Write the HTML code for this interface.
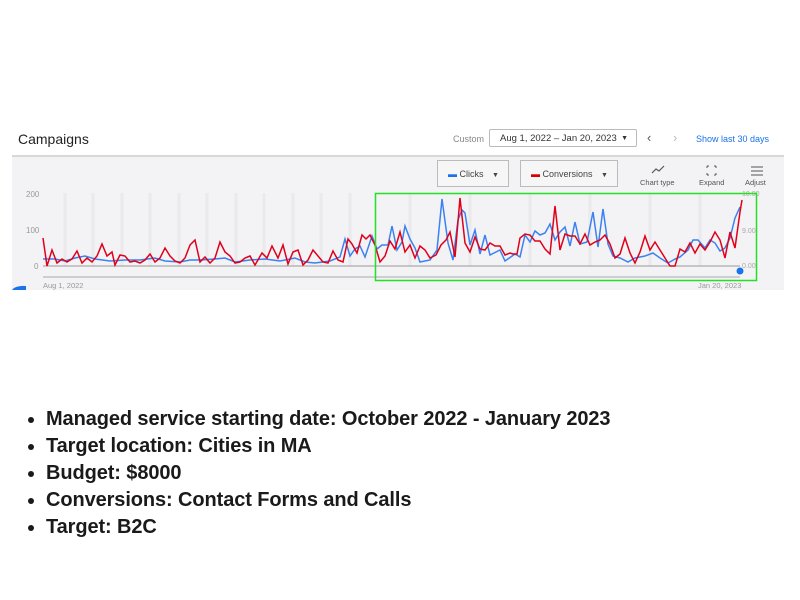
<!DOCTYPE html>
<html><head><meta charset="utf-8"><style>
body{margin:0;width:800px;height:600px;background:#fff;position:relative;overflow:hidden;font-family:"Liberation Sans",sans-serif}
.a{position:absolute}
ul{position:absolute;left:22px;top:406px;margin:0;padding:0 0 0 24px;font-size:20px;font-weight:bold;color:#1a1a1a;line-height:27px;letter-spacing:-0.1px}
</style></head><body>
<div class="a" style="left:12px;top:126px;width:772px;height:29px;background:#fff;border-bottom:2px solid #d8d8d8"></div>
<div class="a" style="left:18px;top:131px;font-size:14px;color:#222">Campaigns</div>
<div class="a" style="left:453px;top:134px;font-size:9px;color:#888">Custom</div>
<div class="a" style="left:489px;top:129px;width:148px;height:18px;border:1px solid #bbb;border-radius:2px;font-size:9.5px;color:#333;line-height:18px;padding-left:10px;box-sizing:border-box">Aug 1, 2022 – Jan 20, 2023<span style="position:absolute;right:8px;font-size:7px">▼</span></div>
<div class="a" style="left:647px;top:130px;font-size:13px;color:#555">‹</div>
<div class="a" style="left:673px;top:130px;font-size:13px;color:#bbb">›</div>
<div class="a" style="left:696px;top:134px;font-size:9px;color:#1a73e8">Show last 30 days</div>
<div class="a" style="left:12px;top:157px;width:772px;height:133px;background:#f3f3f5"></div>
<div class="a" style="left:437px;top:160px;width:72px;height:27px;border:1px solid #bbb;background:#f6f6f6;font-size:9px;color:#444;line-height:27px;box-sizing:border-box;padding-left:10px"><span style="color:#1a73e8">▬</span> Clicks <span style="font-size:7px;margin-left:6px">▼</span></div>
<div class="a" style="left:520px;top:160px;width:98px;height:27px;border:1px solid #bbb;background:#f6f6f6;font-size:9px;color:#444;line-height:27px;box-sizing:border-box;padding-left:10px"><span style="color:#d50000">▬</span> Conversions <span style="font-size:7px;margin-left:6px">▼</span></div>
<div class="a" style="left:640px;top:178px;font-size:7.5px;color:#555">Chart type</div>
<div class="a" style="left:699px;top:178px;font-size:7.5px;color:#555">Expand</div>
<div class="a" style="left:745px;top:178px;font-size:7.5px;color:#555">Adjust</div>
<svg class="a" style="left:0;top:0" width="800" height="300">
<polyline points="652,173 656,169 659,171 664,166" fill="none" stroke="#555" stroke-width="1.2"/>
<path d="M707,166h2M707,166v2M716,166h-2M716,166v2M707,175h2M707,175v-2M716,175h-2M716,175v-2" stroke="#555" stroke-width="1" fill="none"/>
<path d="M751,167h12M751,171h12M751,175h12" stroke="#555" stroke-width="1"/>
<g stroke="#eaeaec" stroke-width="3"><line x1="65" y1="193" x2="65" y2="266"/><line x1="93" y1="193" x2="93" y2="266"/><line x1="122" y1="193" x2="122" y2="266"/><line x1="150" y1="193" x2="150" y2="266"/><line x1="179" y1="193" x2="179" y2="266"/><line x1="207" y1="193" x2="207" y2="266"/><line x1="236" y1="193" x2="236" y2="266"/><line x1="264" y1="193" x2="264" y2="266"/><line x1="293" y1="193" x2="293" y2="266"/><line x1="321" y1="193" x2="321" y2="266"/><line x1="350" y1="193" x2="350" y2="266"/><line x1="410" y1="193" x2="410" y2="266"/><line x1="470" y1="193" x2="470" y2="266"/><line x1="530" y1="193" x2="530" y2="266"/><line x1="590" y1="193" x2="590" y2="266"/><line x1="650" y1="193" x2="650" y2="266"/><line x1="700" y1="193" x2="700" y2="266"/></g>
<line x1="43" y1="266" x2="740" y2="266" stroke="#999" stroke-width="1"/>
<line x1="43" y1="277" x2="740" y2="277" stroke="#aaa" stroke-width="1"/>
<text x="26" y="197" font-size="8" fill="#999" font-family="Liberation Sans">200</text>
<text x="26" y="233" font-size="8" fill="#999" font-family="Liberation Sans">100</text>
<text x="34" y="269" font-size="8" fill="#999" font-family="Liberation Sans">0</text>
<text x="742" y="196" font-size="7" fill="#aaa" font-family="Liberation Sans">10.00</text>
<text x="742" y="233" font-size="7" fill="#aaa" font-family="Liberation Sans">9.00</text>
<text x="742" y="268" font-size="7" fill="#aaa" font-family="Liberation Sans">0.00</text>
<text x="43" y="288" font-size="7.5" fill="#999" font-family="Liberation Sans">Aug 1, 2022</text>
<text x="698" y="288" font-size="7.5" fill="#999" font-family="Liberation Sans">Jan 20, 2023</text>
<polyline fill="none" stroke="#3b82f0" stroke-width="1.5" points="43,259 55,259 65,261 75,258 85,256 95,259 110,261 125,260 140,260 155,258 165,261 180,262 190,260 200,260 215,259 225,258 235,262 250,260 265,259 280,261 295,258 305,262 315,263 330,261 340,257 345,239 350,256 355,249 360,246 365,257 372,236 377,249 382,245 388,245 392,226 397,250 402,242 405,226 410,239 415,248 420,262 430,260 437,250 442,199 448,243 453,260 458,220 462,210 465,213 470,245 475,230 480,254 485,235 490,255 500,250 505,261 515,254 520,257 525,235 530,242 535,231 540,235 545,233 550,224 555,240 560,232 565,227 570,246 575,222 580,244 587,242 593,212 598,247 603,209 608,244 613,256 620,258 628,262 635,258 645,256 653,253 660,258 668,263 675,259 680,257 688,250 693,240 698,240 705,248 710,240 715,243 720,251 725,248 730,238 735,218 740,207"/>
<polyline fill="none" stroke="#e0001b" stroke-width="1.5" points="43,238 47,266 52,250 57,263 62,259 67,262 72,259 77,251 82,263 87,258 92,262 97,256 102,244 107,256 112,252 115,265 120,255 125,256 130,262 135,261 140,263 145,260 150,254 155,262 160,258 165,248 170,256 175,261 180,263 185,258 190,245 195,240 200,262 205,257 210,263 215,258 220,242 225,252 230,256 235,263 240,262 245,258 250,256 255,265 262,253 267,258 272,246 278,258 283,245 288,264 293,252 298,250 303,265 308,260 313,250 318,256 323,262 328,263 333,251 338,260 343,262 348,239 352,244 357,253 362,235 366,239 370,235 375,245 380,262 385,256 390,241 395,249 400,232 405,252 410,245 415,258 420,246 425,250 430,258 436,255 441,245 446,240 450,232 455,257 460,198 465,243 470,252 475,237 480,249 485,250 490,243 495,246 500,246 505,255 510,253 513,254 517,254 520,238 525,234 530,235 535,241 540,241 545,249 550,254 555,206 560,250 565,234 570,236 575,236 580,244 585,234 590,245 595,242 600,240 605,235 610,244 615,258 620,254 625,238 630,253 635,263 640,252 645,236 650,250 655,242 660,250 665,258 670,266 675,266 680,249 685,252 690,243 695,253 700,244 705,250 710,242 715,232 720,240 725,258 730,232 735,248 740,212 742,200"/>
<rect x="375.5" y="193.5" width="381" height="87" fill="none" stroke="#22e022" stroke-width="1.5"/>
<circle cx="740" cy="271" r="3.5" fill="#1a73e8"/>
<path d="M12,290 a12,6 0 0 1 14,-4 v4z" fill="#1a73e8"/>
</svg>
<ul>
<li>Managed service starting date: October 2022 - January 2023</li>
<li>Target location: Cities in MA</li>
<li>Budget: $8000</li>
<li>Conversions: Contact Forms and Calls</li>
<li>Target: B2C</li>
</ul>
</body></html>
